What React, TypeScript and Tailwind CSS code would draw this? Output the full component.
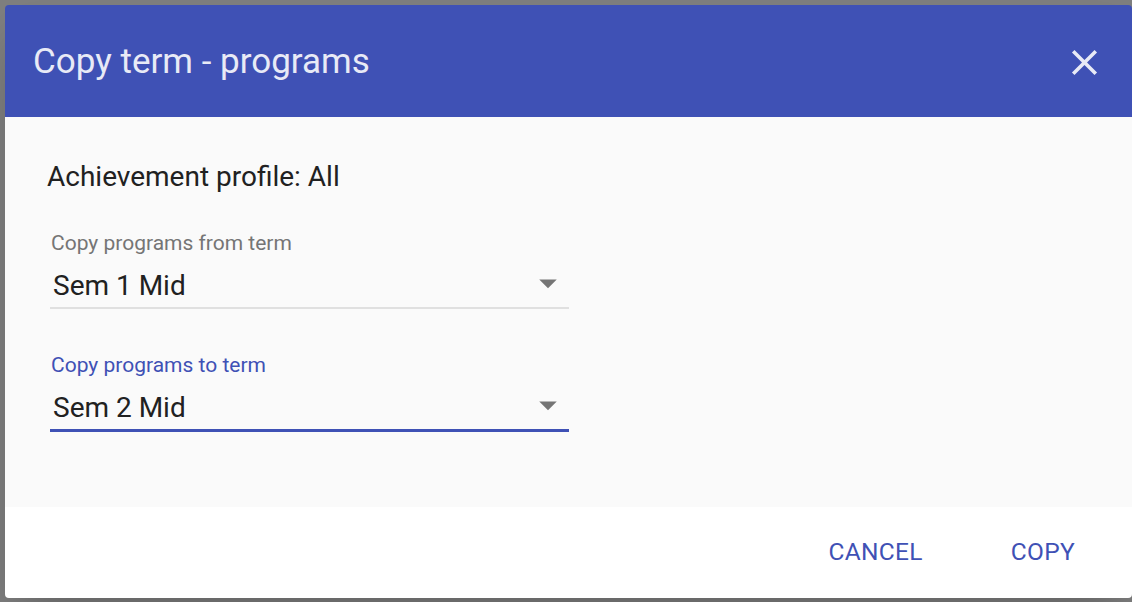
import React from "react";

// Flèche du select (style Material)
function DropArrow() {
  return (
    <svg viewBox="0 0 24 24" className="w-[42px] h-[42px] fill-[#757575] shrink-0">
      <path d="M7 10l5 5 5-5z" />
    </svg>
  );
}

function CloseIcon() {
  return (
    <svg viewBox="0 0 24 24" className="w-[43px] h-[43px] fill-[#e8eaf6]">
      <path d="M19 6.41L17.59 5 12 10.59 6.41 5 5 6.41 10.59 12 5 17.59 6.41 19 12 13.41 17.59 19 19 17.59 13.41 12z" />
    </svg>
  );
}

function TermSelect({
  label,
  value,
  focused,
}: {
  label: string;
  value: string;
  focused?: boolean;
}) {
  return (
    <div className="w-[519px]">
      <div
        className={
          "h-[24px] leading-[24px] text-[21px] pl-[1px] " +
          (focused ? "text-[#3f51b5]" : "text-[#757575]")
        }
      >
        {label}
      </div>
      <div
        className={
          "mt-[15px] flex items-center justify-between pb-[5px] " +
          (focused ? "border-b-[3px] border-[#3f51b5]" : "border-b-2 border-[#e0e0e0]")
        }
      >
        <span className="h-[32px] leading-[32px] text-[28px] text-[#212121] pl-[3px]">{value}</span>
        <div className="-mt-[8px] -mb-[2px]">
          <DropArrow />
        </div>
      </div>
    </div>
  );
}

export default function App() {
  return (
    <div
      className="h-[602px] w-[1132px] overflow-hidden bg-[#7f7f7f] pl-[5px] pt-[5px]"
      style={{ fontFamily: "Roboto, 'Liberation Sans', sans-serif" }}
    >
      <div className="w-[1127px] h-[593px] rounded-[4px] overflow-hidden flex flex-col shadow-2xl">
        {/* En-tête */}
        <div className="h-[112px] bg-[#3f51b5] flex items-center justify-between pl-[28px] pr-[26px] pt-[2px] shrink-0">
          <h1 className="text-[35px] font-normal text-[#e8eaf6]">Copy term - programs</h1>
          <CloseIcon />
        </div>

        {/* Contenu */}
        <div className="flex-1 bg-[#fafafa] pl-[42px] pt-[40px]">
          <div className="h-[40px] leading-[40px] text-[28px] text-[#212121]">Achievement profile: All</div>
          <div className="mt-[34px] pl-[3px]">
            <TermSelect label="Copy programs from term" value="Sem 1 Mid" />
          </div>
          <div className="mt-[44px] pl-[3px]">
            <TermSelect label="Copy programs to term" value="Sem 2 Mid" focused />
          </div>
        </div>

        {/* Actions */}
        <div className="h-[91px] bg-white flex items-center justify-end pr-[57px] gap-[88px] shrink-0">
          <button className="text-[24.5px] text-[#3f51b5] tracking-[0.3px] leading-none">CANCEL</button>
          <button className="text-[24.5px] text-[#3f51b5] tracking-[0.3px] leading-none">COPY</button>
        </div>
      </div>
    </div>
  );
}
